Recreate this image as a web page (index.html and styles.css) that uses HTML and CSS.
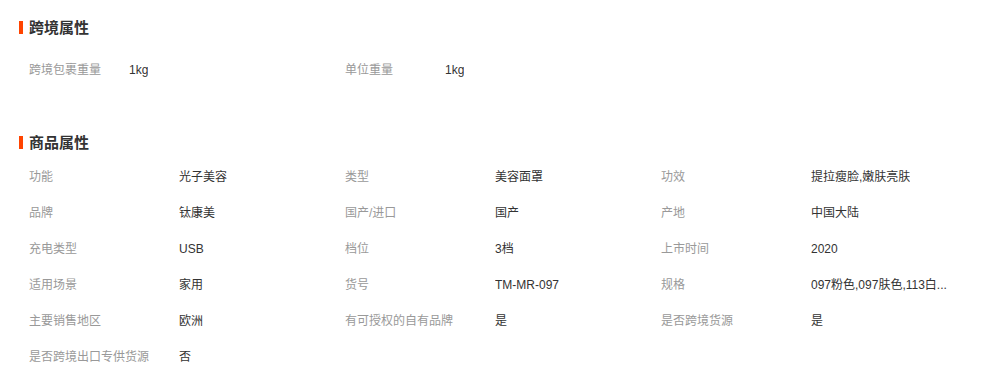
FILE: index.html
```html
<!DOCTYPE html>
<html lang="zh-CN">
<head>
<meta charset="utf-8">
<title>属性</title>
<link rel="stylesheet" href="styles.css">
</head>
<body>
<section class="section section-cross">
  <h2 class="title">跨境属性</h2>
  <div class="grid">
    <div class="item"><span class="label">跨境包裹重量</span><span class="value">1kg</span></div>
    <div class="item"><span class="label">单位重量</span><span class="value">1kg</span></div>
  </div>
</section>
<section class="section section-goods">
  <h2 class="title">商品属性</h2>
  <div class="grid">
    <div class="item"><span class="label">功能</span><span class="value">光子美容</span></div>
    <div class="item"><span class="label">类型</span><span class="value">美容面罩</span></div>
    <div class="item"><span class="label">功效</span><span class="value">提拉瘦脸,嫩肤亮肤</span></div>
    <div class="item"><span class="label">品牌</span><span class="value">钛康美</span></div>
    <div class="item"><span class="label">国产/进口</span><span class="value">国产</span></div>
    <div class="item"><span class="label">产地</span><span class="value">中国大陆</span></div>
    <div class="item"><span class="label">充电类型</span><span class="value">USB</span></div>
    <div class="item"><span class="label">档位</span><span class="value">3档</span></div>
    <div class="item"><span class="label">上市时间</span><span class="value">2020</span></div>
    <div class="item"><span class="label">适用场景</span><span class="value">家用</span></div>
    <div class="item"><span class="label">货号</span><span class="value">TM-MR-097</span></div>
    <div class="item"><span class="label">规格</span><span class="value">097粉色,097肤色,113白...</span></div>
    <div class="item"><span class="label">主要销售地区</span><span class="value">欧洲</span></div>
    <div class="item"><span class="label">有可授权的自有品牌</span><span class="value">是</span></div>
    <div class="item"><span class="label">是否跨境货源</span><span class="value">是</span></div>
    <div class="item"><span class="label">是否跨境出口专供货源</span><span class="value">否</span></div>
  </div>
</section>
</body>
</html>
```

FILE: styles.css
```css
html, body {
  margin: 0;
  padding: 0;
  background: #fff;
}
body {
  font-family: "Liberation Sans", "Noto Sans CJK SC", sans-serif;
  font-size: 12px;
  color: #333;
  width: 983px;
  height: 369px;
  overflow: hidden;
}
.section {
  padding-left: 19px;
}
.section-cross {
  padding-top: 17px;
}
.section-goods {
  padding-top: 44px;
}
.title {
  margin: 0;
  display: flex;
  align-items: center;
  gap: 6px;
  height: 20px;
  font-size: 15px;
  line-height: 20px;
  font-weight: bold;
  color: #333;
  font-family: "Noto Sans CJK SC", sans-serif;
}
.title::before {
  content: "";
  width: 4px;
  height: 13px;
  background: #ff4400;
}
.section-cross .title {
  margin-bottom: 15px;
}
.section-goods .title {
  margin-bottom: 7px;
}
.grid {
  display: grid;
  grid-template-columns: repeat(3, 316px);
  padding-left: 10px;
}
.item {
  display: flex;
  height: 36px;
  line-height: 36px;
  white-space: nowrap;
}
.label {
  flex: 0 0 150px;
  color: #999;
}
.section-cross .label {
  flex-basis: 100px;
}
.value {
  color: #333;
  overflow: hidden;
  max-width: 150px;
}
.section-goods .item:nth-child(n+7) {
  height: 36px;
}
```
